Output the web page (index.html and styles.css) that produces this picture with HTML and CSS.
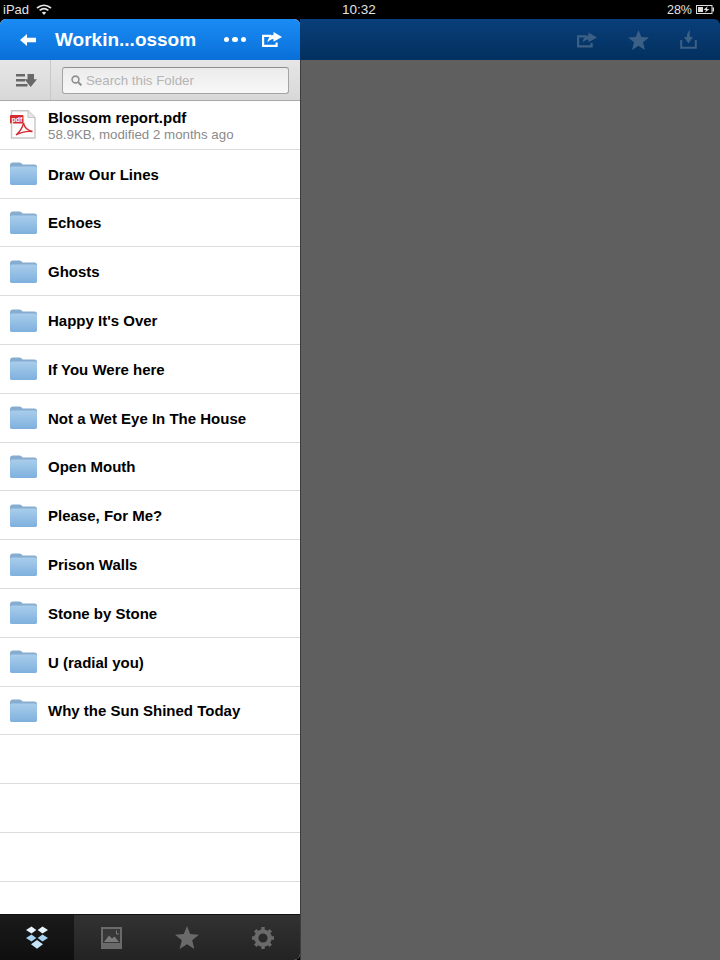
FILE: index.html
```html
<!DOCTYPE html>
<html lang="en">
<head>
  <meta charset="UTF-8" />
  <title>Dropbox</title>
  <link rel="stylesheet" href="styles.css">
</head>
<body>
  <svg class="defs" width="0" height="0">
    <defs>
      <linearGradient id="folderBody" x1="0" y1="0" x2="0" y2="1">
        <stop offset="0" stop-color="#a9cdeb"/>
        <stop offset="1" stop-color="#7eb0de"/>
      </linearGradient>
    </defs>
    <symbol id="folder" viewBox="0 0 27 23">
      <path d="M0 3.5 Q0 .5 3 .5 H9.5 Q11.5 .5 12.5 2.5 H24.5 Q27 2.5 27 5 V20.5 Q27 23 24.5 23 H2.5 Q0 23 0 20.5 Z" fill="#86acd0"/>
      <path d="M0 6.5 Q0 4.6 2 4.6 H25 Q27 4.6 27 6.5 V20.5 Q27 23 24.5 23 H2.5 Q0 23 0 20.5 Z" fill="url(#folderBody)"/>
    </symbol>
    <symbol id="share" viewBox="0 0 20 15">
      <path d="M9.5 3.8 H1.1 V13.9 H14.6 V10.5" fill="none" stroke="currentColor" stroke-width="2.2"/>
      <path d="M11.5 0 L20 4.9 L11.5 9.8 V7 Q8 7 5.5 10.6 Q6 4 11.5 2.8 Z" fill="currentColor"/>
    </symbol>
    <symbol id="star" viewBox="0 0 24 23">
      <path d="M12 0 L15.2 8 L24 8.7 L17.2 14.2 L19.4 23 L12 18.2 L4.6 23 L6.8 14.2 L0 8.7 L8.8 8 Z" fill="currentColor"/>
    </symbol>
  </svg>

  <div class="status">
    <div class="status-left">
      <span>iPad</span>
      <svg class="wifi" viewBox="0 0 16 11" width="16" height="11">
        <path d="M1 4 Q8 -1.5 15 4" fill="none" stroke="#e4e4e4" stroke-width="1.7"/>
        <path d="M3.6 6.4 Q8 3 12.4 6.4" fill="none" stroke="#e4e4e4" stroke-width="1.7"/>
        <path d="M8 11 L5.8 8.6 Q8 7 10.2 8.6 Z" fill="#e4e4e4"/>
      </svg>
    </div>
    <div class="status-time">10:32</div>
    <div class="status-right">
      <span>28%</span>
      <svg viewBox="0 0 19 9" width="19" height="9">
        <rect x="0.5" y="0.5" width="15.5" height="8" fill="none" stroke="#ddd"/>
        <rect x="2" y="2" width="5" height="5" fill="#ddd"/>
        <path d="M11.5 1.2 L7.5 5 H10 L8.8 7.8 L13.5 4 H11 Z" fill="#ddd"/>
        <rect x="16.5" y="2.5" width="1.5" height="4" fill="#ddd"/>
      </svg>
    </div>
  </div>

  <div class="main">
    <div class="panel">
      <div class="nav">
        <svg class="back" viewBox="0 0 16 12" width="16" height="12">
          <path d="M0 6 L7 0 V3.8 H16 V8.2 H7 V12 Z" fill="#fff"/>
        </svg>
        <div class="nav-title">Workin...ossom</div>
        <div class="dots"><i></i><i></i><i></i></div>
        <svg class="nav-share" width="20" height="15"><use href="#share"/></svg>
      </div>

      <div class="searchbar">
        <div class="sort">
          <svg viewBox="0 0 21 13" width="21" height="13">
            <path d="M0 0 H9 V2.4 H0 Z M0 5 H9 V7.4 H0 Z M0 10 H11.5 V12.4 H0 Z" fill="#686868"/>
            <path d="M11.5 0 H18 V5.2 H21 L14.7 13 L8.5 5.2 H11.5 Z" fill="#686868"/>
          </svg>
        </div>
        <div class="search">
          <svg viewBox="0 0 11 11" width="11" height="11">
            <circle cx="4.5" cy="4.5" r="3.4" fill="none" stroke="#909090" stroke-width="1.6"/>
            <path d="M7 7 L10.4 10.4" stroke="#909090" stroke-width="2"/>
          </svg>
          <span>Search this Folder</span>
        </div>
      </div>

      <ul class="list">
        <li class="row">
          <svg class="pdf" viewBox="0 0 27 29" width="27" height="29">
            <path d="M1.5 .8 H18 L25 7.5 V28 H1.5 Z" fill="#fcfcfc" stroke="#c6c6c6" stroke-width="1.4"/>
            <path d="M18 .8 V7.5 H25" fill="#e6e6e6" stroke="#c6c6c6"/>
            <rect x="0" y="5" width="13.5" height="8.5" rx="1" fill="#d62a30"/>
            <text x="1.4" y="11.8" class="pdf-label">pdf</text>
            <path d="M6 25 Q12 20 13.5 13 Q15 20 22.5 21.5 Q14 20.5 6 25 Z" fill="none" stroke="#d62a30" stroke-width="1.3"/>
          </svg>
          <div class="file-text">
            <div class="name">Blossom report.pdf</div>
            <div class="meta">58.9KB, modified 2 months ago</div>
          </div>
        </li>
        <li class="row"><svg class="folder" width="27" height="23"><use href="#folder"/></svg><div class="name">Draw Our Lines</div></li>
        <li class="row"><svg class="folder" width="27" height="23"><use href="#folder"/></svg><div class="name">Echoes</div></li>
        <li class="row"><svg class="folder" width="27" height="23"><use href="#folder"/></svg><div class="name">Ghosts</div></li>
        <li class="row"><svg class="folder" width="27" height="23"><use href="#folder"/></svg><div class="name">Happy It's Over</div></li>
        <li class="row"><svg class="folder" width="27" height="23"><use href="#folder"/></svg><div class="name">If You Were here</div></li>
        <li class="row"><svg class="folder" width="27" height="23"><use href="#folder"/></svg><div class="name">Not a Wet Eye In The House</div></li>
        <li class="row"><svg class="folder" width="27" height="23"><use href="#folder"/></svg><div class="name">Open Mouth</div></li>
        <li class="row"><svg class="folder" width="27" height="23"><use href="#folder"/></svg><div class="name">Please, For Me?</div></li>
        <li class="row"><svg class="folder" width="27" height="23"><use href="#folder"/></svg><div class="name">Prison Walls</div></li>
        <li class="row"><svg class="folder" width="27" height="23"><use href="#folder"/></svg><div class="name">Stone by Stone</div></li>
        <li class="row"><svg class="folder" width="27" height="23"><use href="#folder"/></svg><div class="name">U (radial you)</div></li>
        <li class="row"><svg class="folder" width="27" height="23"><use href="#folder"/></svg><div class="name">Why the Sun Shined Today</div></li>
        <li class="row"></li>
        <li class="row"></li>
        <li class="row"></li>
      </ul>

      <div class="tabs">
        <div class="tab active">
          <svg viewBox="0 0 24 23" width="24" height="23">
            <path d="M6.5 0.5 L11.3 4 L6.5 7.5 L1 4 Z M17.5 0.5 L23 4 L17.5 7.5 L12.7 4 Z" fill="#e6f3fb"/>
            <path d="M6.5 8.5 L11.3 12 L6.5 15.5 L1 12 Z M17.5 8.5 L23 12 L17.5 15.5 L12.7 12 Z" fill="#a6d3f1"/>
            <path d="M12 14 L18 18.3 L12 22.8 L6 18.3 Z" fill="#c6e4f7"/>
          </svg>
        </div>
        <div class="tab">
          <svg viewBox="0 0 21 22" width="21" height="22">
            <rect width="21" height="22" fill="#6a6a6a"/>
            <rect x="2" y="2" width="17" height="14" fill="#383838"/>
            <path d="M3 15 L8 8.5 L11 11.5 L13.5 9.5 L18 15 Z" fill="#7a7a7a"/>
            <path d="M15.5 3.5 V7 H18" fill="none" stroke="#7a7a7a"/>
          </svg>
        </div>
        <div class="tab">
          <svg class="tab-star" width="24" height="23"><use href="#star"/></svg>
        </div>
        <div class="tab">
          <svg viewBox="0 0 22 22" width="22" height="22">
            <circle cx="11" cy="11" r="6.7" fill="none" stroke="#6a6a6a" stroke-width="4.2"/>
            <path d="M11 0 V22 M0 11 H22 M3.2 3.2 L18.8 18.8 M18.8 3.2 L3.2 18.8" stroke="#6a6a6a" stroke-width="3.4" stroke-dasharray="3.4 15.2 3.4"/>
          </svg>
        </div>
      </div>
    </div>

    <div class="detail">
      <div class="toolbar">
        <svg class="tool" width="20" height="16"><use href="#share"/></svg>
        <svg class="tool" width="21" height="20"><use href="#star"/></svg>
        <svg class="tool" viewBox="0 0 17 19" width="17" height="19">
          <path d="M1.2 10 V17.8 H15.8 V10" fill="none" stroke="currentColor" stroke-width="2"/>
          <path d="M10 0 Q6.5 3 7 7 H4 L8.5 13.5 L13 7 H10 Q9.5 4 10 0 Z" fill="currentColor"/>
        </svg>
      </div>
      <div class="blank"></div>
    </div>
  </div>
</body>
</html>
```

FILE: styles.css
```css
* {
  box-sizing: border-box;
}
body {
  margin: 0;
  width: 720px;
  height: 960px;
  overflow: hidden;
  background-color: #000;
  font-family: "Liberation Sans", Arial, sans-serif;
  display: flex;
  flex-direction: column;
}
.defs {
  position: absolute;
}
.status {
  height: 19px;
  flex: none;
  padding: 0 5px 0 3px;
  display: grid;
  grid-template-columns: 1fr auto 1fr;
  align-items: center;
  color: #e4e4e4;
  font-size: 13px;
}
.status-left {
  display: flex;
  align-items: center;
  gap: 7px;
}
.status-time {
  font-size: 13.5px;
}
.status-right {
  display: flex;
  justify-content: flex-end;
  align-items: center;
  gap: 4px;
  font-size: 12.5px;
}
.main {
  flex: 1;
  display: flex;
  min-height: 0;
  background-color: #000;
}
.panel {
  width: 300px;
  flex: none;
  display: flex;
  flex-direction: column;
  background-color: #fff;
  border-radius: 6px 6px 6px 0;
  overflow: hidden;
}
.nav {
  height: 41px;
  flex: none;
  display: flex;
  align-items: center;
  padding: 0 18px 0 20px;
  color: #fff;
  background: linear-gradient(#1a8cf5, #0a6fd8);
}
.nav-title {
  margin-left: 19px;
  font-size: 19px;
  font-weight: bold;
  flex: 1;
}
.dots {
  display: flex;
  gap: 3px;
  margin-right: 16px;
}
.dots i {
  width: 5.5px;
  height: 5.5px;
  border-radius: 50%;
  background-color: #fff;
}
.searchbar {
  height: 41px;
  flex: none;
  display: flex;
  background: linear-gradient(#e6e6e6, #d8d8d8);
  border-bottom: 1px solid #a8a8a8;
}
.sort {
  width: 51px;
  padding-left: 3px;
  display: flex;
  align-items: center;
  justify-content: center;
  border-right: 1px solid #c8c8c8;
}
.search {
  width: 227px;
  height: 27px;
  margin: 7px 0 0 11px;
  padding-left: 8px;
  display: flex;
  align-items: center;
  gap: 4px;
  font-size: 13.3px;
  color: #b4b4b4;
  background: linear-gradient(#ebebeb, #f8f8f8);
  border: 1px solid #a4a4a4;
  border-top-color: #8f8f8f;
  border-radius: 3px;
}
.list {
  list-style: none;
  margin: 0;
  padding: 0;
  flex: 1;
  min-height: 0;
}
.row {
  height: 48.8px;
  display: flex;
  align-items: center;
  gap: 11px;
  padding-left: 10px;
  border-bottom: 1px solid #dcdcdc;
}
.file-text {
  padding-top: 1px;
}
.pdf-label {
  font-size: 7px;
  font-weight: bold;
  fill: #fff;
}
.name {
  padding-top: 1px;
  font-size: 15px;
  font-weight: bold;
  color: #000;
}
.meta {
  font-size: 13.3px;
  color: #8a8a8a;
  margin-top: 1px;
}
.tabs {
  height: 46px;
  flex: none;
  display: grid;
  grid-template-columns: 74px 75px 76px 75px;
  border-top: 1px solid #111;
  background: linear-gradient(#323232, #232323);
}
.tab {
  display: flex;
  align-items: center;
  justify-content: center;
}
.tab.active {
  background: linear-gradient(#1a1a1a, #0f0f0f);
}
.tab-star {
  color: #6a6a6a;
}
.detail {
  flex: 1;
  display: flex;
  flex-direction: column;
}
.toolbar {
  height: 41px;
  flex: none;
  display: flex;
  justify-content: flex-end;
  align-items: center;
  gap: 31px;
  padding-right: 23px;
  color: #3c5f85;
  background: linear-gradient(#0a3f7a, #02305f);
  border-radius: 0 6px 0 0;
}
.blank {
  flex: 1;
  background-color: #5f5f5f;
  border-left: 1px solid #3c3c3c;
}
```
